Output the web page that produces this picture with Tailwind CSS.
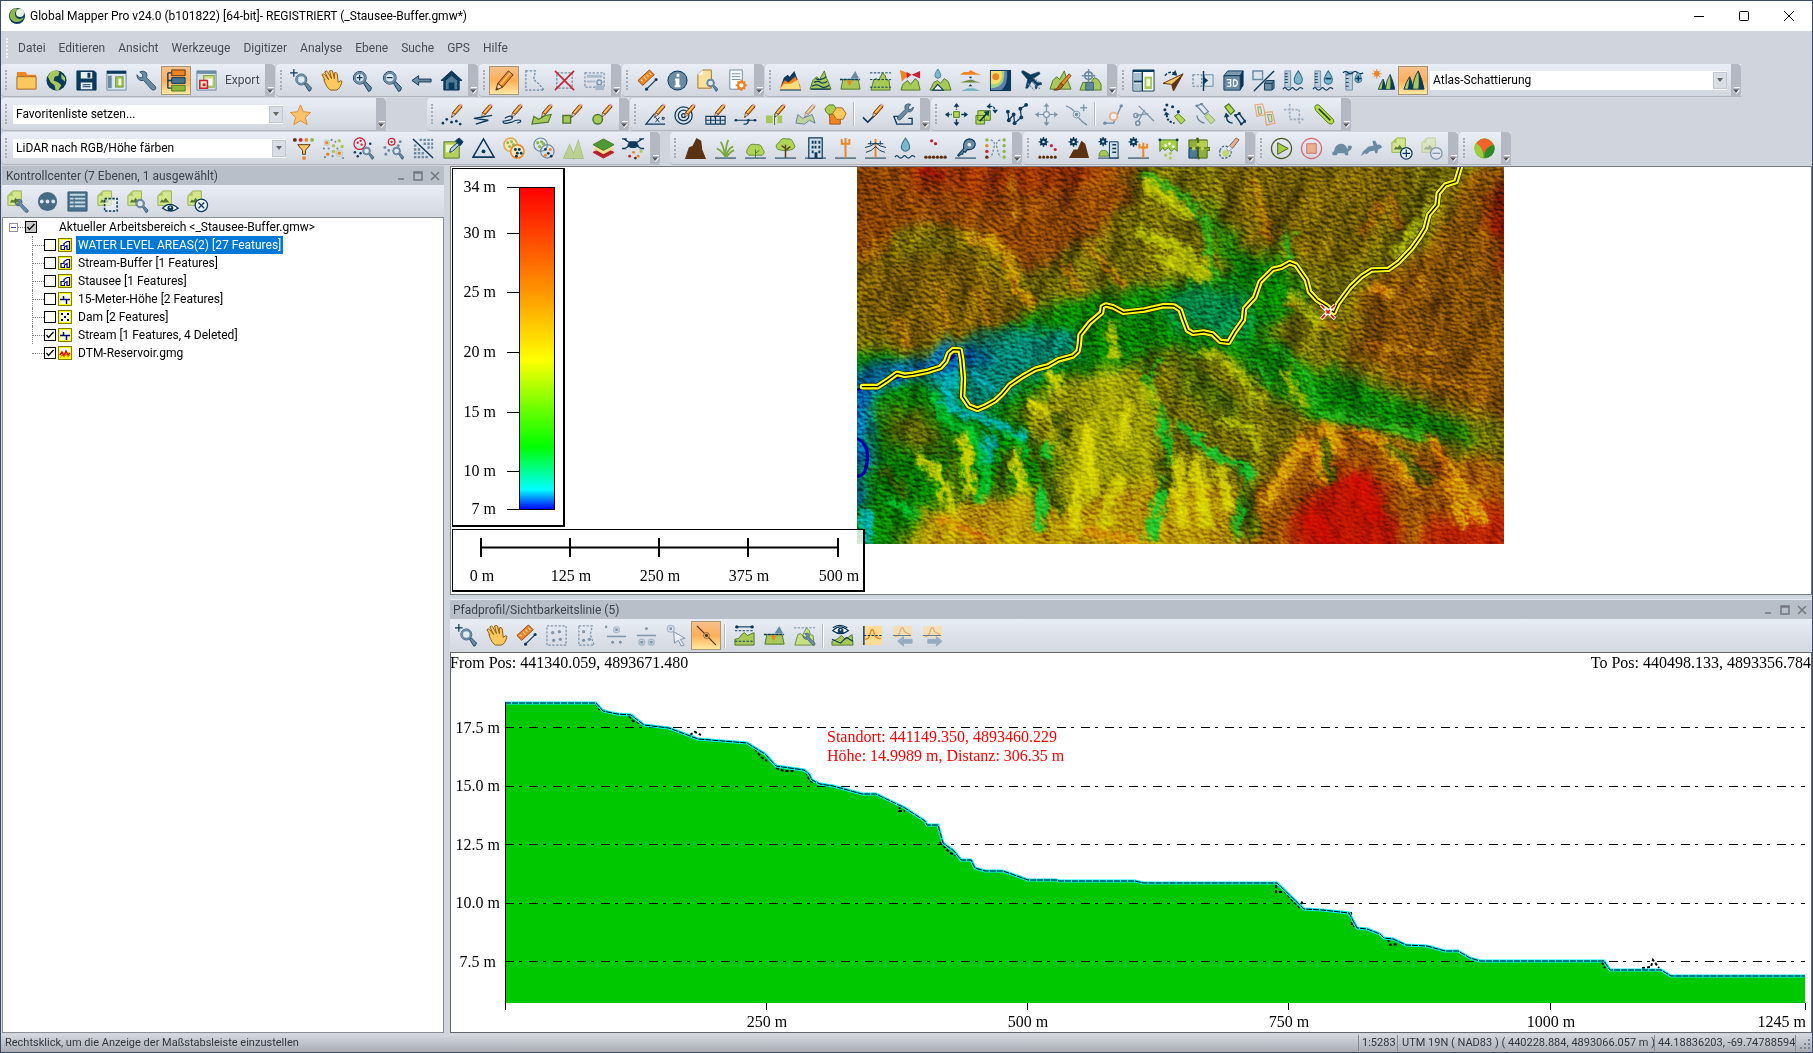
<!DOCTYPE html>
<html lang="de">
<head>
    <meta charset="utf-8">
    <title>Global Mapper Pro</title>
    <script src="https://cdn.jsdelivr.net/npm/@tailwindcss/browser@4"></script>
    <style>
        body {
            font-family: Roboto, 'Open Sans', sans-serif;
        }
        svg text {
            font-family: 'Liberation Serif', serif;
            font-size: 16px;
        }
    </style>
</head>
<body class="h-screen flex flex-col overflow-hidden bg-[#d0d4dd] border border-[#3b4d6b] text-xs text-black">

    <!-- Title bar -->
    <header class="flex items-center h-[30px] shrink-0 bg-white pl-2">
        <svg class="size-4" viewBox="0 0 16 16"><circle cx="8" cy="8" r="8" fill="#0b3a5c"/><path d="M4 1c-5 5-4 12 3 13 4 0 7-2 8-5-2 2-6 3-8 0-2-2-1-6 2-8-2-1-4-1-5 0z" fill="#8cb84a"/><circle cx="11" cy="5" r="4" fill="#e8f0e4"/></svg>
        <h1 class="ml-[5px] whitespace-nowrap">Global Mapper Pro v24.0 (b101822) [64-bit]- REGISTRIERT (_Stausee-Buffer.gmw*)</h1>
        <div class="ml-auto flex">
            <button aria-label="Minimieren" class="w-[45px] h-[30px] grid place-items-center"><svg class="size-3" viewBox="0 0 12 12"><path d="M1 6.500h10" stroke="#000"/></svg></button>
            <button aria-label="Maximieren" class="w-[45px] h-[30px] grid place-items-center"><svg class="size-3" viewBox="0 0 12 12"><rect x="1.500" y="1.500" width="9" height="9" rx="1" fill="none" stroke="#000"/></svg></button>
            <button aria-label="Schließen" class="w-[46px] h-[30px] grid place-items-center"><svg class="size-3" viewBox="0 0 12 12"><path d="M1 1l10 10M11 1L1 11" stroke="#000"/></svg></button>
        </div>
    </header>

    <!-- Menu -->
    <nav class="flex items-center h-[33px] shrink-0 pl-[5px] text-[#4a4d55]">
        <span class="h-5 border-l-2 border-dotted border-[#f4f5f8] mr-[10px]"></span>
        <div class="flex gap-[13px]">
            <button>Datei</button><button>Editieren</button><button>Ansicht</button><button>Werkzeuge</button><button>Digitizer</button><button>Analyse</button><button>Ebene</button><button>Suche</button><button>GPS</button><button>Hilfe</button>
        </div>
    </nav>

    <!-- Toolbars -->
    <section class="flex flex-col gap-px shrink-0 h-[101px]">
        <div class="flex">
            <div class="bar mr-px" data-tools="folder globe save layout wrench *tree export:Export"></div>
            <div class="bar mr-px" data-tools="zoomrect hand magplus magminus back home"></div>
            <div class="bar mr-px" data-tools="*pencil selpoly delsel editattr"></div>
            <div class="bar mr-px" data-tools="ruler info docsearch docgear"></div>
            <div class="bar mr-px" data-tools="mcolor mcontour mcut mdash mred mdrop split heat plane mbrush mtarget"></div>
            <div class="bar" data-tools="maplayout compass mirror cube percent gauge gaugeminus gaugeplus msun *mpair select:shader"></div>
        </div>
        <div class="flex">
            <div class="bar mr-[41px]" data-tools="select:fav star wide"></div>
            <div class="bar mr-px" data-tools="dpoints dzig dfree darea dsquare dcircle"></div>
            <div class="bar mr-px" data-tools="dangle dtarget dgrid darc dmirror dfade blob | dcheck wbox"></div>
            <div class="bar" data-tools="move scale reshape movefade addnode | nodefade cutfade rot1 rot2 rot3 dup crop tube"></div>
        </div>
        <div class="flex">
            <div class="bar mr-[10px]" data-tools="select:lidar lfilter lpoints lzoom lzoom2 lhatch lpick ltri lclass lclass2 lmesh llayers ldrone"></div>
            <div class="bar mr-px" data-tools="ground grass bush treeicon building pole wires water lowpts key corridor"></div>
            <div class="bar mr-px" data-tools="gpoints gground gbuild gpole gextract puzzle pbrush"></div>
            <div class="bar mr-px" data-tools="play stop turtle rabbit docadd docsub"></div>
            <div class="bar" data-tools="insight"></div>
        </div>
    </section>

    <main class="flex flex-1 min-h-0 gap-[5px] pt-px">
        <!-- Control center -->
        <aside class="w-[444px] shrink-0 flex flex-col pl-px pr-px">
            <div class="flex items-center h-[19px] pl-1 pr-[2px] bg-[#b9bfc9] text-[#3e424a]">
                <h2>Kontrollcenter (7 Ebenen, 1 ausgewählt)</h2>
                <div class="panelbtns ml-auto flex gap-1"></div>
            </div>
            <div class="flex h-8 bg-linear-to-b from-[#e9edf6] to-[#d3d7e0]" data-icons="cwrench cdots ctable cselect cfind ceye cclose"></div>
            <ul id="layers" class="flex-1 bg-white border border-[#8a8d94] mb-px pl-[6px]"></ul>
        </aside>

        <div class="flex-1 min-w-0 flex flex-col">
            <!-- Map view -->
            <section class="relative h-[429px] shrink-0 bg-white border border-[#77797f] overflow-hidden">
                <svg class="ml-[406px] w-[647px] h-[377px]" viewBox="0 0 647 377" preserveAspectRatio="none" role="img" aria-label="Geländemodell">
                    <defs>
                        <filter id="soft" x="-20%" y="-20%" width="140%" height="140%" color-interpolation-filters="sRGB"><feGaussianBlur stdDeviation="20" result="b"/><feTurbulence type="fractalNoise" baseFrequency=".02 .014" numOctaves="4" seed="4"/><feDisplacementMap in="b" scale="60" xChannelSelector="R" yChannelSelector="G"/></filter>
                        <filter id="ridge" x="-20%" y="-20%" width="140%" height="140%" color-interpolation-filters="sRGB"><feGaussianBlur stdDeviation="6" result="b"/><feTurbulence type="fractalNoise" baseFrequency=".05 .03" numOctaves="5" seed="9"/><feDisplacementMap in="b" scale="44" xChannelSelector="R" yChannelSelector="G"/></filter>
                        <filter id="fine" x="0" y="0" width="100%" height="100%" color-interpolation-filters="sRGB"><feTurbulence type="fractalNoise" baseFrequency=".22 .3" numOctaves="3" seed="3"/><feColorMatrix values="0 0 0 0 0 0 0 0 0 0 0 0 0 0 0 1 0 0 0 0"/><feDiffuseLighting surfaceScale="2.200" lighting-color="#fff" diffuseConstant="1"><feDistantLight azimuth="300" elevation="30"/></feDiffuseLighting></filter>
                        <filter id="broad" x="0" y="0" width="100%" height="100%" color-interpolation-filters="sRGB"><feTurbulence type="fractalNoise" baseFrequency=".024 .015" numOctaves="3" seed="21"/><feColorMatrix values="0 0 0 0 0 0 0 0 0 0 0 0 0 0 0 1 0 0 0 0"/><feDiffuseLighting surfaceScale="9" lighting-color="#fff" diffuseConstant="1"><feDistantLight azimuth="210" elevation="28"/></feDiffuseLighting></filter>
                    </defs>
                    <rect width="647" height="377" fill="#766e00"/>
                    <g transform="scale(.4209 .3333) translate(-17 -21)">
                        <g filter="url(#soft)">
                            <path fill="#904800" d="M-60-60H700L640 160 520 300 420 330 300 220 150 180 20 330-60 330z"/>
                            <path fill="#963400" d="M80-60H640L560 70 330 110 160 100z"/>
                            <path fill="#7a5c00" d="M-60 330L300 260 400 420 460 440 330 520 150 560-60 430z"/>
                            <path fill="#746c00" d="M420 340L620 200 760 340 700 400 560 420 470 460z"/>
                            <path fill="#087e00" d="M-60 560L150 590 330 520 460 440 600 400 760 370 900 340 840 160 860 130 930 280 1010 290 1040 320 1090 430 1000 480 1180 640 1400 760 1500 820 1480 850 1340 820 1120 780 1000 700 900 590 760 560 640 620 520 650 400 740 420 850 480 900 440 1200-60 1200z"/>
                            <path fill="#786200" d="M850-60H1330L1300 200 1180 320 1080 290 980 250 900 180z"/>
                            <path fill="#845000" d="M1210 400L1380 250 1460 60 1620-60 1620 800 1400 720 1180 600z"/>
                            <path fill="#8c1200" d="M1535 60L1700 30 1700 360 1550 330 1520 210z"/>
                            <path fill="#726c00" d="M990 480L1130 500 1180 620 1100 640 1010 540z"/>
                            <path fill="#008472" d="M320 520L480 500 560 560 480 620 380 700 300 780 200 700 180 620z"/>
                            <path fill="#008a4a" d="M760 390L900 370 960 440 960 540 800 510 740 440z"/>
                            <path fill="#0062b8" d="M-60 640L110 620 240 560 310 560 320 620 200 640 60 690 36 1010 0 1060-60 1050z"/>
                            <path fill="#a0a000" d="M540 660L680 600 740 760 720 1200 520 1200 500 960 440 780z"/>
                            <path fill="#b89800" d="M190 1040L420 980 520 1040 700 960 900 960 940 1240 80 1240z"/>
                            <path fill="#587200" d="M780 560L960 760 900 800 780 700z"/>
                            <path fill="#606800" d="M80 740L190 760 240 860 110 880z"/>
                            <path fill="#9a5400" d="M970 1000L1100 800 1240 800 1400 900 1700 900 1700 1300 960 1300z"/>
                            <path fill="#b81400" d="M1050 1060L1180 920 1260 960 1290 1060 1320 1200 1060 1300z"/>
                            <path fill="#bc2600" d="M1380 1080L1700 980 1700 1300 1340 1300z"/>
                        </g>
                        <g filter="url(#ridge)" fill="none" stroke-linecap="round" opacity=".92">
                            <path stroke="#bcc400" stroke-width="34" d="M700 70L760 120 810 170M690 220L780 260 830 320M740 300L840 350"/>
                            <path stroke="#c89400" stroke-width="26" d="M330 230L380 300 400 390 430 430M350 260L280 230"/>
                            <path stroke="#22b01c" stroke-width="18" d="M700 40L800 110 850 200 860 330 890 370M1010 560L1080 640 1110 760 1220 780 1380 840M1040 300L1040 220M740 600L700 650 740 760M960 600L1000 680"/>
                            <path stroke="#b87800" stroke-width="14" d="M385 60L395 180M210 380L235 490M300 400L335 490M110 480L150 560M510 310L545 390M570 260L650 380M960 60L1000 250M1340 330L1380 400M1220 220L1260 130M1160 510L1040 430M1240 560L1420 580M1280 640L1480 680M1290 100L1300 200M60 230L40 310"/>
                            <path stroke="#b0bc00" stroke-width="24" d="M620 500L630 590M840 570L930 640 970 720M1050 400L1110 490M880 780L950 800 960 860M1030 640L1080 740M690 680L730 720M1300 280L1380 150"/>
                            <path stroke="#00d038" stroke-width="20" d="M200 700L230 790 290 810 320 930 310 1020M360 800L420 870 470 860 450 1100M790 800L870 890 950 930 920 1120M740 780L760 880 740 1000 715 1130M1330 960L1260 840M90 1020L150 1060"/>
                            <path stroke="#d8d400" stroke-width="26" d="M170 900L220 960 240 1050M270 830L290 1000M390 880L410 980M640 960L600 1100M780 900L790 1090M880 920L900 1040M480 640L500 700M430 720L460 760M560 800L580 1000M660 740L650 860M540 960L540 1120M820 900L850 1100"/>
                            <path stroke="#d89800" stroke-width="28" d="M1130 800L1170 880M1200 810L1270 850 1340 990M1380 840L1450 960 1500 1080M1240 380L1280 400M220 1080L330 1140M560 1110L680 1150M990 1020L1080 840M1100 860L1120 960M1420 960L1460 1100"/>
                            <path stroke="#00b4bc" stroke-width="24" d="M240 650L230 740 330 780 420 830M40 1060L40 1150M330 830L330 900M330 680L290 640"/>
                            <path stroke="#466000" stroke-width="26" d="M820 640L900 730M790 600L850 680M490 760L510 840M375 880L360 1000M130 1000L80 930M1130 850L1140 960M1290 860L1370 960M750 900L755 980M440 860L500 1060M240 880L260 1020M940 980L960 1120"/>
                            <path stroke="#d01000" stroke-width="44" d="M1200 960L1250 1060M1100 1080L1140 1140"/>
                            <path stroke="#aa1800" stroke-width="30" d="M180 30L210 50"/>
                        </g>
                        <path d="M17 835Q42 850 42 890 40 950 17 950M17 690L120 650 220 615 250 585" fill="none" stroke="#0000a8" stroke-width="8"/>
                    </g>
                    <rect width="647" height="377" filter="url(#broad)" class="mix-blend-overlay" opacity=".4"/>
                    <rect width="647" height="377" filter="url(#fine)" class="mix-blend-overlay" opacity=".45"/>
                    <defs><path id="stream" d="M30 680L66 680 88 662 112 640 130 646 150 643 185 634 215 622 228 604 235 580 245 569 262 570 266 600 270 655 268 710 283 738 303 748 322 738 345 722 362 702 380 675 412 648 440 628 470 618 495 600 530 588 542 574 545 555 547 525 570 488 598 458 600 440 608 435 625 440 650 457 700 450 745 437 770 438 785 450 793 480 802 510 815 520 840 516 862 522 880 544 900 547 915 515 935 480 938 445 962 412 975 365 1005 328 1025 322 1045 308 1060 315 1085 360 1092 395 1110 420 1135 440 1150 458 1160 430 1190 380 1215 350 1240 330 1280 328 1305 305 1335 265 1355 230 1367 205 1375 165 1395 135 1398 100 1415 75 1440 65 1452 15" vector-effect="non-scaling-stroke" stroke-linejoin="round" stroke-linecap="round"/></defs>
                    <g transform="scale(.4209 .3333) translate(-17 -21)" fill="none">
                        <use href="#stream" stroke="#222200" stroke-width="7"/>
                        <use href="#stream" stroke="#ffff00" stroke-width="5.600"/>
                        <use href="#stream" stroke="#000" stroke-width="1.300"/>
                    </g>
                    <path d="M464 138l14 14M478 138l-14 14" stroke="#fff" stroke-width="3.500"/>
                    <path d="M464 138l14 14M478 138l-14 14" stroke="#f00000" stroke-width="1.600" stroke-dasharray="5 2"/>
                </svg>
                <!-- Elevation legend -->
                <svg class="absolute left-px top-px w-[113px] h-[359px] bg-white border border-r-2 border-b-2 border-black" viewBox="0 0 110 356" id="legend">
                    <defs><linearGradient id="elev" x2="0" y2="1"><stop stop-color="#f00"/><stop offset=".33" stop-color="#ff9800"/><stop offset=".536" stop-color="#ff0"/><stop offset=".7" stop-color="#60ff00"/><stop offset=".805" stop-color="#0f0"/><stop offset=".938" stop-color="#0ff"/><stop offset="1" stop-color="#00f"/></linearGradient></defs>
                    <rect x="66.500" y="18.500" width="35" height="322" fill="url(#elev)" stroke="#000"/>
                    <path d="M54 18.500h12M54 64.500h12M54 123.500h12M54 183.500h12M54 243.500h12M54 302.500h12M54 340.500h12" stroke="#000"/>
                    <g text-anchor="end"><text x="43" y="23">34 m</text><text x="43" y="69">30 m</text><text x="43" y="128">25 m</text><text x="43" y="188">20 m</text><text x="43" y="248">15 m</text><text x="43" y="307">10 m</text><text x="43" y="345">7 m</text></g>
                </svg>
                <!-- Scale bar -->
                <svg class="absolute left-px top-[362px] w-[413px] h-[63px] bg-white/80 border border-r-2 border-b-2 border-black" viewBox="0 0 410 60">
                    <path d="M28 17.500h357M28 8v19M117 8v19M206 8v19M295 8v19M385 8v19" stroke="#000" stroke-width="2"/>
                    <g text-anchor="middle"><text x="29" y="51">0 m</text><text x="118" y="51">125 m</text><text x="207" y="51">250 m</text><text x="296" y="51">375 m</text><text x="386" y="51">500 m</text></g>
                </svg>
            </section>

            <!-- Path profile -->
            <section class="flex-1 min-h-0 flex flex-col mt-[4px] mb-px">
                <div class="flex items-center h-5 px-[3px] bg-[#b9bfc9] text-[#3e424a] border-t border-[#e8ebf0]">
                    <h2>Pfadprofil/Sichtbarkeitslinie (5)</h2>
                    <div class="panelbtns ml-auto flex gap-1"></div>
                </div>
                <div class="flex items-center h-[33px] pl-px bg-linear-to-b from-[#e9edf6] to-[#d3d7e0]" data-icons="zoomrect hand ruler pselect pselpoly pabove pbelow ppick *pnode | pline mcut pwrench | peye pgraph pprev pnext"></div>
                <div class="flex-1 min-h-0 bg-white border border-[#66686e]">
                    <svg id="profile" class="w-full h-full" viewBox="451 653 1360 379" preserveAspectRatio="none">
                        <path id="terrain" fill="#00c800" d=""/>
                        <path d="M505 727.500H1805M505 786.500H1805M505 844.500H1805M505 903.500H1805M505 961.500H1805" stroke="#000" stroke-dasharray="9 5 3 7"/>
                        <path id="bare" fill="none" stroke="#000" stroke-dasharray="3 2" stroke-width="2"/>
                        <path id="sight" fill="none" stroke="#00f0ff" stroke-width="3"/>
                        <path id="sight2" fill="none" stroke="#000" stroke-dasharray="6 1"/>
                        <path d="M505.500 702V1010M766.500 1003v7M1027.500 1003v7M1288.500 1003v7M1550.500 1003v7M1805.500 1003v7" stroke="#000"/>
                        <text x="450" y="668">From Pos: 441340.059, 4893671.480</text>
                        <text x="1811" y="668" text-anchor="end">To Pos: 440498.133, 4893356.784</text>
                        <g text-anchor="end"><text x="500" y="733">17.5 m</text><text x="500" y="791">15.0 m</text><text x="500" y="850">12.5 m</text><text x="500" y="908">10.0 m</text><text x="496" y="967">7.5 m</text><text x="1806" y="1027">1245 m</text></g>
                        <g text-anchor="middle"><text x="767" y="1027">250 m</text><text x="1028" y="1027">500 m</text><text x="1289" y="1027">750 m</text><text x="1551" y="1027">1000 m</text></g>
                        <g fill="#f00"><text x="827" y="742">Standort: 441149.350, 4893460.229</text><text x="827" y="761">Höhe: 14.9989 m, Distanz: 306.35 m</text></g>
                    </svg>
                </div>
            </section>
        </div>
    </main>

    <!-- Status bar -->
    <footer class="flex items-center h-[18px] shrink-0 bg-linear-to-b from-[#d6d9df] to-[#a8adb5] pl-1 text-[#33363d] whitespace-nowrap">
        <span class="text-[11px]">Rechtsklick, um die Anzeige der Maßstabsleiste einzustellen</span>
        <div class="ml-auto flex items-center text-[11px] leading-4">
            <span class="w-[39px] border-l border-[#888c94] pl-[3px]">1:5283</span>
            <span class="w-[257px] border-l border-[#888c94] pl-1">UTM 19N ( NAD83 ) ( 440228.884, 4893066.057 m )</span>
            <span class="w-[141px] border-l border-[#888c94] pl-[3px]">44.18836203, -69.74788594</span>
            <svg class="w-[17px] h-4 border-l border-[#888c94]" viewBox="0 0 16 16"><path d="M12 4h2v2h-2zM12 8h2v2h-2zM12 12h2v2h-2zM8 8h2v2H8zM8 12h2v2H8zM4 12h2v2H4z" fill="#7d828b"/></svg>
        </div>
    </footer>

    <script>
        const N = '#0b3a5c', S = '#6b8ba3', G = '#a8c85a', O = '#ee8422', Y = '#fbc75f', B = '#5b3213', R = '#cc1f2f', D = '#4d7a2a';
        const f = (c, d) => `<path fill="${c}" d="${d}"/>`;
        const s = (c, d, w = 1.5, x = '') => `<path fill="none" stroke="${c}" stroke-width="${w}" d="${d}" ${x}/>`;
        const fs = (c, k, d, w = 1) => `<path fill="${c}" stroke="${k}" stroke-width="${w}" d="${d}"/>`;
        const c = (x, y, r, col) => `<circle cx="${x}" cy="${y}" r="${r}" fill="${col}"/>`;
        const ring = (x, y, r, col, w = 1.5, fill = 'none') => `<circle cx="${x}" cy="${y}" r="${r}" fill="${fill}" stroke="${col}" stroke-width="${w}"/>`;
        const dots = (col, r, ...p) => { let t = ''; for (let i = 0; i < p.length; i += 2) t += c(p[i], p[i + 1], r, col); return t; };
        const fade = (t, o = .45) => `<g opacity="${o}">${t}</g>`;
        const at = (x, y, k, t) => `<g transform="translate(${x} ${y}) scale(${k})">${t}</g>`;
        const dash = (col, d, w = 1.3) => s(col, d, w, 'stroke-dasharray="2.500 1.500"');

        // shared parts
        const pen = fs(O, B, 'M12 10l7-8 3 2-7 8z') + f(Y, 'M13 10l7-8 1 1-7 8z') + fs('#f0d8b4', B, 'M12 10l3 2-4 3z', .7) + f(B, 'M10.500 15.500l2-1-1-1z') + f('#e89a90', 'M19 2l1-1.500 3 2-1 1.500z');
        const mag = fs(S, N, 'M14 15l2-2 6 6-1 3-2 1z', 1) + ring(10, 9, 6.500, N, 1, '#dfeaf2') + ring(10, 9, 5, S, 2.200);
        const doc = fs('#d3e68c', '#93b04f', 'M2 6l5-5h9v15H2z') + f('#a5c45c', 'M2 6h5V1z') + f('#587a34', 'M4 13l2-3 2 1 2-3 4 5z');
        const spanner = fs(S, '#33546e', 'M2 6l3 3h3V6L5 3q4-2 7 1 1 3 0 5l9 9q2 3-1 4-2 0-3-1L9 12q-4 1-6-2-1-2-1-4z', 1);
        const mt = (a, b = D) => fs(a, b, 'M2 22l3-11 3-1 2 2 4-8 3 3 1 4 3 1 1 10z');
        const mount = fs(G, D, 'M1 21l3-9 4-4 3 3 5-9 2 7 2 4 3 8z');
        const gear = () => ring(8, 6, 3, N, 2.500) + s(N, 'M8 0v12M2 6h12M4 2l8 8M12 2L4 10', 1.800) + c(8, 6, 1.500, '#dde6ee');
        const drop = () => fs('#7db7cc', '#2f6e88', 'M5 0q5 7 3 10-3 3-6 0Q0 7 5 0z', .9);
        const wave = s(N, 'M1 21q2-3 4 0 2 2 4 0 2-3 4 0 2 2 4 0 2-3 5 0', 1.200);
        const base = s('#2f5873', 'M1 22h22', 1.300);
        const eye = fs('#fff', N, 'M6 17q7-8 16 0-8 6-16 0z', 1.500) + c(14, 17, 3, N) + c(14, 16, 1, '#cfe0ea');
        const gaugeBar = fs('#b7cbd8', S, 'M3 2h6v17H3z', .9) + s(N, 'M3 5h3M3 8h3M3 11h3M3 14h3', 1) + wave;
        const pines = fs(G, N, 'M2 21q2-7 6-13 3 8 4 13z') + f(N, 'M8 8q-1 8-2 13h6Q11 15 8 8z') + fs(G, N, 'M11 21q1-12 6-19 4 9 6 19z') + f(N, 'M17 2q1 11 0 19h6Q21 10 17 2z');

        const icons = {
            folder: f(O, 'M2 3h9l2 3h9v5H2z') + fs(Y, '#a8651c', 'M2 8h20v13H2z'),
            globe: c(12, 12, 10.500, N) + f(G, 'M6 3q5-3 9 0l-1 4-4 1-1 4 5 2 3 3-3 5-3 0-1-5-4-3-3-6zM17 5l4 4v4l-4-3z'),
            save: fs(N, N, 'M2 2h18l2 2v18H2z') + f('#e7eef4', 'M6 3h12v7H6zM6 14h12v7H6z') + f(N, 'M13 4h3v5h-3zM8 16h8v1H8zM8 18h8v1H8z'),
            layout: fs('#dce6ee', S, 'M2 2h20v20H2z') + f(N, 'M2 2h20v3H2z') + f(S, 'M3 7h4v13H3z') + fs('#9fc04c', D, 'M11 8h8v11h-8z', .6) + f('#f4f8e0', 'M14 10h3v7h-3z'),
            wrench: spanner,
            tree: s(N, 'M3 4v16M3 4h5M3 12h5M3 20h5', 1.400) + fs(O, B, 'M7 1h14v6H7z') + fs('#46708c', N, 'M7 9h14v6H7z') + fs('#88b93c', D, 'M7 17h14v6H7z'),
            export: fs('#d5e0e8', S, 'M2 2h20v20H2z') + f(S, 'M2 2h20v3H2z') + fs('#cfe08a', '#8fae48', 'M9 7h11v12H9z', 1.300) + f('#fff', 'M12 10h6v7h-6z') + fs('#f6e4c0', R, 'M5 12h8v8H5z', 1.600) + f(R, 'M8 15h3v3H8z'),
            zoomrect: s(N, 'M0 4h8M4 0v8', 1.300) + at(3, 3, .88, mag),
            hand: fs(Y, '#8a5a14', 'M5 11L2 6q1-2 3 0l4 5-4-8q2-2 3 0l4 7-2-8q2-1 3 0l2 8V4q2-1 3 1l1 9q3-3 4-1-2 8-6 9h-6q-4-2-7-11z'),
            magplus: at(0, 0, 1.020, mag) + s(N, 'M7 9h6M10 6v6', 1.400),
            magminus: at(0, 0, 1.020, mag) + s(N, 'M7 9h6', 1.400),
            back: fs(S, N, 'M2 12l7-5v3.500h13v3H9V17z'),
            home: fs(N, N, 'M1 12L12 2l11 10h-3v10H4V12z') + f('#507a98', 'M6 12l6-5 6 5v9h-3v-7H9v7H6z'),
            pencil: fs(O, B, 'M5 15L16 2l5 4L10 19z') + s(Y, 'M8 16L18 4', 1.800) + fs('#f0d8b4', B, 'M5 15l5 4-7 3z') + f(B, 'M3 22l3-1-2-2z'),
            selpoly: dash(S, 'M3 2h10l-2 9 5 4 6 7H3z'),
            delsel: dash(S, 'M4 4h16v16H4z') + s(R, 'M2 2l20 20M22 2L2 22', 1.600),
            editattr: fade(dash(N, 'M2 4h20v15H2z') + f(S, 'M4 6h16v3H4zM4 12h9v2H4z') + ring(17, 14, 2.500, N) + f(S, 'M13 17h9v5h-9z')),
            ruler: fs(O, '#8f4710', 'M2 12L14 1l5 5L7 17z') + s('#ffe0b0', 'M5 11l2 2M8 8l3 3M11 6l2 2M14 4l2 2', 1.200) + s(N, 'M11 21L21 11', 1.200) + dots(N, 1.600, 11, 21, 21, 11),
            info: c(12, 12, 10.500, N) + c(12, 12, 9.500, S) + f('#fff', 'M11 5h3v3h-3zM10 10h4v7h1v2h-6v-2h1v-5h-1z'),
            docsearch: fs('#fbdf9c', '#a3732a', 'M2 6l5-5h9v19H2z') + f('#fff', 'M2 6h5V1z') + at(9, 9, .62, mag),
            docgear: fs('#fff', S, 'M4 1h13v20H4z') + s(S, 'M6 5h9M6 8h9M6 11h9', 1) + ring(16, 17, 3.500, O, 2.500, '#fff') + s(O, 'M16 11v3M16 20v3M10 17h3M19 17h3M12 13l2 2M18 19l2 2M20 13l-2 2M14 19l-2 2', 1.600),
            mcolor: f(N, 'M2 18l3-9 4-3 2 2 5-6 3 8 3 8z') + fs(O, '#d0660c', 'M2 18l4-6 4 2 7-6 5 10v3H2z', .6) + f('#fbdc7a', 'M1 21l4-5 8-1 7-4 2 10z') + s(N, 'M1 22h22', 1),
            mcontour: mount + s(N, 'M3 18q5-3 9 0t9-1M5 14q5-2 7 0t7-1M7 10q6 3 11-2M2 21h20', 1.300),
            mcut: fs(G, D, 'M2 21l2-10h16l2 10z') + f(S, 'M12 10l5-8 4 8z') + s(N, 'M1 11h21', 1.500, 'stroke-dasharray="3 1"') + f(O, 'M8 12h6l-3 6z'),
            mdash: mt(G) + dash(N, 'M1 4h22M1 11h22M1 19h22', 1),
            mred: fs(G, D, 'M2 22l2-6 5-4 3 4 5-6 3 3 2 9z') + f(O, 'M1 1l10 4-8 8z') + f(R, 'M8 3l5 3-5 4zM13 6l9-4v8z'),
            mdrop: fs(G, D, 'M1 22l4-8 4-2 3 3 4-5 4 3 3 9z') + fs('#fff', N, 'M4 22l5-6 6 6z', 1.200) + at(5, 0, .85, drop()),
            split: f(O, 'M1 6l4-3 5 0 2-2 5 3 6 2z') + f('#6f8a3c', 'M1 14l7-2 5-1 5 2 5 1z') + f('#79b4c4', 'M2 23l7-3 7 0 6 3z') + f(N, 'M10 8h4l-2 2zM10 18h4l-2-2z'),
            heat: f(N, 'M1 1h22v22H1z') + f('#5f7fae', 'M2 2h17q1 14-6 20H2z') + f('#9bd38a', 'M2 2h14q1 12-6 16-4 2-8 2z') + f('#f7e06a', 'M2 2h11q2 10-4 13-3 1-7 1z') + c(7, 8, 3.500, O),
            plane: at(24, 0, 1, `<g transform="scale(-1 1)">${fs(N, N, 'M19 2q3-1 2 2l-6 7 2 9-2 0-4-7-4 3 0 4-1 1-2-4-4-1 1-2 4 0 4-4-7-5 1-2 9 3z', .6)}</g>`) + s(S, 'M14 13l8 8M9 15l7 7M15 9l7 6', 1.200, 'stroke-dasharray="2 1"'),
            mbrush: mount + fs(O, B, 'M12 15L21 5l2 2-8 10z', .8) + fs('#c25a12', B, 'M12 15l3 2q-3 6-10 5 4-1 7-7z', .8),
            mtarget: fs(G, D, 'M1 22l3-8h7v8zM13 22v-9l3-4 4 2 3 5v6z') + fs('#5f87a2', '#3b5f78', 'M7 14h8v8H7z') + ring(10, 7, 4, S, 2) + s(S, 'M10 0v14M3 7h14', 1.400),
            maplayout: fs('#fff', N, 'M1 1h22v22H1z') + f('#a9c0cf', 'M2 4h8v8H2zM2 15h8v7H2z') + f(N, 'M2 12h8v2H2zM10 1h1.500v22H10zM1 1h22v2H1z') + f(G, 'M13 8h8v13h-8z') + f('#f0f6dc', 'M15 10h4v8h-4z'),
            compass: fs(Y, B, 'M1 15L22 5 12 23l-2-7z') + f(B, 'M22 5L12 23l-2-7z') + s(N, 'M3 7q5-6 11-2', 1.500, 'stroke-dasharray="3 1.500"') + f(N, 'M14 1l2 6-6-1z'),
            mirror: dash(S, 'M1 6h9v12H1z') + fs('#d9e4ec', S, 'M13 6h9v12h-9z') + s(N, 'M12 2v21', 1.500) + f(N, 'M12 8l5 4-5 4z'),
            cube: fs('#7e9bb0', N, 'M2 7l4-5h16l-3 5z') + fs('#0e3049', N, 'M19 7l3-5v15l-3 5z') + fs('#6d8da5', N, 'M2 7h17v15H2z') + s('#fff', 'M5 11h4v7H5M6 14.500h3M12 11v7q4 0 4-3.500T12 11', 1.300),
            percent: fs('#d9e4ec', S, 'M1 2h10v9H1z', 1.500) + s(N, 'M2 23L23 2', 1.500) + fs(S, N, 'M13 15l2-3h8v8l-2 2h-8zM13 15h8v7M21 15l2-3', 1),
            gauge: gaugeBar + at(11, 2, 1.200, drop()),
            gaugeminus: gaugeBar + at(11, 2, 1.200, drop()) + s(N, 'M14 10h6', 1.800),
            gaugeplus: fs('#b7cbd8', S, 'M4 3h7v19H4z', .9) + s(N, 'M4 6h3M4 10h3M4 14h3M4 18h3', 1) + s(N, 'M1 4q3-3 5 0 3 2 5 0 3-3 5 0 3 2 6 0', 1.400) + at(12, 3, 1, drop()) + s(N, 'M14 10h6M17 7v6', 1.500),
            msun: at(5, 4, .82, pines) + c(5, 5, 2.800, O) + s(O, 'M5 0v10M0 5h10M1.500 1.500l7 7M8.500 1.500l-7 7', 1),
            mpair: pines,
            star: fs('#fbc06a', '#e08a34', 'M12 2l3 7 7.500 1-5.500 5 2 7.500-7-4-7 4 2-7.500L1.500 10 9 9z'),
            dpoints: pen + dots(N, 1.400, 2, 21, 6, 17, 11, 20, 16, 19, 20, 22),
            dzig: pen + s(N, 'M22 13L3 16l15 2L5 22', 1.400),
            dfree: pen + s(N, 'M4 16q6-4 8-1 0 3-10 4 0 4 9 1 6-3 9-2 2 2-3 3', 1.200),
            darea: pen + fs(G, D, 'M1 22l2-8 5 3 7-4 6-1-3 8z', 1.200),
            dsquare: pen + fs(G, D, 'M2 13h8v8H2z', 1.500),
            dcircle: pen + ring(7, 17, 5, D, 1.500, G),
            dangle: pen + s(N, 'M22 22H2L11 11', 1.300) + s(N, 'M12 15l4 5M16 15l-4 5M19 15h2v2h-2z', 1),
            dtarget: ring(10, 13, 9, N, 1.300) + ring(10, 13, 5.500, N, 1.300) + ring(10, 13, 2, N, 1.300) + pen,
            dgrid: pen + s(N, 'M2 14h20v8H2zM2 18h20M7 14v8M12 14v8M17 14v8', 1.200),
            darc: pen + s(N, 'M2 18h20M15 18q0 5-5 4', 1.300) + dots(N, 1.400, 2, 18, 15, 18, 22, 18),
            dmirror: pen + f(G, 'M2 13h7v8H2zM14 13h5v8h-5z') + s(D, 'M11 11v12', 1),
            dfade: fade(pen + fs(G, N, 'M2 21l2-9 5 4 10-4 3 9-6-3-5 4z'), .55),
            blob: fs(O, '#a85010', 'M5 10h7l5 6v6H6v-6z') + fs('#a8cf4a', D, 'M1 6l4-4h5l3 4-2 5-6 1-3-3z') + fs(Y, '#a96a1c', 'M9 11l4-6h6l4 6-3 6h-7z'),
            dcheck: s(N, 'M1 15l5 5L16 10', 1.600) + pen,
            wbox: s(N, 'M9 14H2l3 8h16v-6h-4', 1.400) + at(24, -1, 1, `<g transform="scale(-.850 .850)">${spanner}</g>`),
            move: fs('#b5d84c', D, 'M9 9h6v6H9z') + s(N, 'M12 1v6M12 17v6M1 12h6M17 12h6', 1.500, 'stroke-dasharray="4 1"') + f(N, 'M12 0l3 4H9zM12 24l3-4H9zM0 12l4-3v6zM24 12l-4-3v6z'),
            scale: fs('#b5d84c', D, 'M1 13h9v9H1zM3 8h13v10H3z') + s(N, 'M5 19L13 10', 1.800) + f(N, 'M15 8l-1 6-5-5z') + s(N, 'M15 4q5-2 6 4', 1.300, 'stroke-dasharray="3 1"') + f(N, 'M12 4l4-4v6zM18 7h6l-3 4z'),
            reshape: s(N, 'M3 9l1 9 5-6 1 9 7-6-1-9 6-4', 1.300) + dots(N, 2, 3, 9, 4, 18, 9, 12, 10, 21, 17, 15, 16, 6, 22, 2),
            movefade: fade(s(N, 'M12 1v22M1 12h22', 1.300) + f(N, 'M12 0l3 4H9zM12 24l3-4H9zM0 12l4-3v6zM24 12l-4-3v6z') + ring(12, 12, 3, N, 1.200, '#fff')),
            addnode: fade(s(N, 'M1 3q8 3 11 9t11 11M16 5h7M19.500 1.500v7', 1.600) + ring(12, 12, 3.500, N, 1, '#fff') + c(12, 12, 2, N)),
            nodefade: fade(s(N, 'M2 21h9l8-18', 1.300) + ring(11, 14, 4, O, 2, '#fff') + dots(N, 1.800, 2, 21, 19, 3), .5),
            cutfade: fade(s(N, 'M6 3l16 16M12 7L5 20M3 13l13-2', 1.300) + ring(3, 13, 2.200, N) + ring(5, 21, 2.200, N)),
            rot1: fs('#b5d84c', D, 'M12 14l4-3 7 7-4 4z') + dots(N, 1.600, 4, 2, 10, 4, 2, 7, 16, 9) + dash(N, 'M4 12q0 8 8 9', 2) + f(N, 'M1 13l6-1-4-3z'),
            rot2: fade(s(N, 'M4 3l5-2 7 8-4 3zM4 13q1 7 8 8', 1.300) + fs('#b5d84c', D, 'M12 14l4-3 7 7-4 4z') + dots(N, 1.500, 4, 3, 9, 1), .55),
            rot3: fs('#b5d84c', D, 'M2 4l4-3 6 7-4 4z', 1.300) + s(N, 'M13 13l4-2 6 8-4 3zM4 14q-1 6 6 7', 1.500) + f(N, 'M1 15l6-1-4-4z') + dots(N, 1.500, 13, 13, 17, 11, 23, 19, 19, 22),
            dup: fade(s(O, 'M2 2l8-1 3 11-9 2zM12 10l8-1 3 12-9 2z', 1.200) + fs('#cfe08a', D, 'M5 4h3l1 7-3 1zM15 12h4l1 7-3 1z'), .6),
            crop: fade(dash(N, 'M7 1v16h16M1 7h16v16', 1.800), .3),
            tube: fs('#b5d84c', '#4c7a1c', 'M2 5q0-4 4-3l15 15q2 4-2 5-2 0-3-1L3 8z') + s('#21400c', 'M6 6l12 12', 1.800),
            lfilter: dots(B, 2, 3, 3) + dots(R, 2, 9, 3) + dots(O, 2, 15, 3) + dots('#8cb84a', 2, 21, 3) + fs(Y, B, 'M6 8h13l-5 6v4h-3v-4z') + dots(O, 2, 12.5, 22),
            lpoints: ring(5, 6, 3, '#b5c4a0', .8) + ring(18, 17, 3.500, '#b5c4a0', .8) + dots(O, 1.800, 5, 6, 18, 17, 6, 18) + dots(G, 1.800, 12, 9, 18, 4, 12, 15, 21, 10) + dots(S, 1.100, 10, 3, 14, 5, 2, 12, 7, 12, 16, 12, 3, 21, 11, 20, 22, 22),
            lzoom: ring(8, 7, 6, R, 1.300) + dots(R, 1.200, 6, 6, 9, 4, 10, 8) + dots(N, 1.300, 3, 16, 6, 20, 9, 17, 19, 7) + at(9, 9, .62, mag),
            lzoom2: ring(10, 5, 3.500, R, 1.300) + dots(R, 1.200, 10, 5) + dots(S, 1.500, 3, 11, 7, 14, 4, 18, 19, 5, 17, 9) + at(9, 9, .62, mag),
            lhatch: s(N, 'M1 2l21 20', 1.500) + dash(S, 'M8 3h14M12 7h10M16 11h6M2 9h3M2 13h7M2 17h11M2 21h15', 2.500),
            lpick: fs('#b7cf5e', D, 'M2 5h16v17H2z') + f('#eef5c8', 'M4 8h8v8H4z') + fs('#b9d0df', N, 'M8 16l1-4 7-6 2 2-7 7z') + fs(N, N, 'M14 4l4-3 4 4-3 4z'),
            ltri: s(N, 'M12 2L1 21h22z', 1.600) + dots(N, 2, 12, 15),
            lclass: ring(9, 8, 7, '#e0a54c', 1.500, '#f6e6b8') + ring(16, 15, 7, O, 1.500, '#f5e7c0') + dots('#8cb84a', 1.500, 6, 6, 10, 5, 8, 10, 12, 8) + dots(N, 1.500, 14, 13, 18, 13, 16, 17, 20, 17, 15, 20),
            lclass2: ring(9, 8, 7, S, 1.200) + ring(16, 15, 7, S, 1.200) + dots('#8cb84a', 1.700, 6, 6, 10, 5, 8, 10, 12, 7) + dots(N, 1.400, 14, 13, 17, 17, 20, 20) + dots(O, 1.600, 19, 13, 14, 19),
            lmesh: fade(s('#7a9a2c', 'M2 22L8 8l4 10 5-14 5 18zM5 22l3-14 4 14 5-18 2 18M4 17h17', 1.200) + f(G, 'M2 22L8 8l4 10 5-14 5 18z'), .6),
            llayers: fs('#b0202c', R, 'M1 16l11-5 11 5-11 6z') + f('#f2dc90', 'M1 12l11-6 11 6-11 6z') + fs('#4d9a34', D, 'M1 8l11-6 11 6-11 6z'),
            ldrone: fs(N, N, 'M8 5h7l2 4-3 2H9L6 9z') + s(N, 'M2 2l6 4M21 2l-6 4M3 12l5-3M20 12l-5-3M0 2h5M18 2h5M0 12h5M18 12h5', 1.400) + dots(O, 1.500, 12, 16, 17, 20) + dots(R, 1.500, 8, 20) + dots(G, 1.500, 20, 15) + dots(B, 1.500, 14, 22),
            ground: f(B, 'M1 23l4-12 4-2 4-8 5 3 1 9 4 10z'),
            grass: base + s('#7aa83a', 'M12 21Q8 14 3 12M12 21Q10 10 7 5M12 21q0-12 3-18M12 21q3-10 8-11M13 21q4-6 8-7', 1.800),
            bush: base + fs('#b0d455', D, 'M5 19q-4-3-1-7 2-6 8-4 6-1 7 4 4 4 0 7z', .8) + s(D, 'M12 22v-9M12 17l4-3', 1),
            treeicon: base + fs('#b0d455', D, 'M4 13q-4-4 1-7 3-6 8-4 6-1 7 4 4 5-1 7-7 3-15 0z', .8) + s('#5a4420', 'M12 22V8M12 14l5-4M12 12L8 9', 1.600),
            building: base + fs('#d0dfe9', N, 'M5 1h14v21H5z', 1.300) + f(N, 'M8 4h2v3H8zM11 4h2v3h-2zM15 4h2v3h-2zM8 9h2v3H8zM11 9h2v3h-2zM15 9h2v3h-2zM8 14h2v3H8zM15 14h2v3h-2zM11 16h3v6h-3z'),
            pole: base + s(O, 'M12 1v21M8 2v5h8V2', 2),
            wires: base + s(O, 'M12 2v20', 2) + s(N, 'M4 7h16M12 6Q8 10 1 11M12 6q4 4 11 5M12 10q-4 5-10 6M12 10q4 5 10 6M7 4v4M17 4v4', 1),
            water: at(6, 1, 1.200, drop()) + wave,
            lowpts: dots(R, 1.700, 8, 4, 12, 7) + dots(B, 1.800, 2, 21, 6, 21, 10, 21, 14, 21, 18, 21, 22, 21),
            key: base + fs(S, N, 'M4 19l6-7q-1-9 6-10 7 1 6 7-2 5-8 4l-2 3-2-1-1 3H7l-2 2z', 1.200) + c(16, 8, 2, '#dfe9f0'),
            corridor: dots('#8cb84a', 1.800, 3, 3, 21, 3, 21, 9, 21, 15, 21, 21) + dots(O, 1.800, 3, 9) + dots(R, 1.800, 3, 15) + dots(B, 1.800, 3, 21) + dash(S, 'M7 3q6 2 3 9-1 6-3 9M17 3q-6 2-3 9 1 6 3 9'),
            gpoints: at(0, 0, .85, gear()) + dots(R, 1.600, 15, 9, 19, 13) + dots(B, 1.600, 3, 21, 7, 21, 11, 21, 15, 21, 19, 21),
            gground: f(B, 'M2 22l5-9 4 0 4-9 4 3 4 15z') + at(0, 0, .85, gear()),
            gbuild: fs('#d0dfe9', N, 'M13 5h9v17h-9z') + s(N, 'M16 8h4M16 12h4M16 16h4', 1.500) + fs(G, D, 'M2 20q0-6 5-6t5 6z', .8) + s(N, 'M1 22h22', 1) + at(0, 0, .8, gear()),
            gpole: base + s(O, 'M17 6v16M13 7v4h8V7', 2) + at(0, 0, .85, gear()),
            gextract: fs('#a8cf3f', D, 'M3 3h18v12l-3-3-3 3-3-4-4 3-2-3-3 4z') + dots('#fff', 1.500, 9, 9, 13, 7, 17, 10) + dots('#b0cf50', 1.700, 9, 19, 14, 17, 14, 22) + dots(N, 1.500, 3, 3, 21, 3),
            puzzle: fs('#8fae3c', '#47631a', 'M2 3h9v8H2zM12 3h9v8h3v3h-3v8h-9z') + f('#b7cf4e', 'M13 4h8v7h-8z') + fs('#4f7a96', N, 'M2 12h9v10H2z') + s('#47631a', 'M11.500 3v19M2 11.500h19', 1.200) + dots('#b7cf4e', 2, 12, 8, 7, 12, 16, 12) + dots('#47631a', 1.500, 11, 2, 12, 22),
            pbrush: fade(dash(N, 'M3 14q3-7 9-3 5 5 1 9-7 5-10-1z') + c(9, 17, 3.500, '#b5d84c') + fs('#e6a079', B, 'M13 9l7-8 3 2-7 9z') + fs('#eee', S, 'M10 12l3-3 3 3-4 3z'), .75),
            play: ring(12, 12, 10.500, '#4a5c2c', 1.300) + fs('#a3cf3a', '#4a5c2c', 'M8 6l11 6-11 6z'),
            stop: fade(ring(12, 12, 10.500, R, 1.300) + fs('#f0924c', R, 'M7 7h10v10H7z'), .6),
            turtle: f(S, 'M3 19q-2-3 1-4 1-7 7-8 6 0 7 6l1-4q4-1 4 2-1 3-4 4v4h-3l-1-2-7 0-1 2z'),
            rabbit: f(S, 'M1 20l2-5 6-5 5-1-1-5 3 0 2 4q4-1 5 3l-4 2-1 4h-2l-1-3-5 1-3 3-2-1z'),
            docadd: doc + ring(17, 17, 6, N, 1.300, '#eaf1f6') + s(N, 'M13 17h8M17 13v8', 1.300),
            docsub: fade(doc + ring(17, 17, 6, N, 1.300, '#eaf1f6') + s(N, 'M13 17h8', 1.300)),
            insight: c(12, 12, 10.500, '#5fa82e') + f('#f2632a', 'M3 7Q12-4 21 7l-9 10z') + f('#9dcc3f', 'M1.500 12Q2 6 4 7q7 4 7 15Q2 21 1.500 12z') + f('#2f8a2a', 'M12 22q-1-12 10-14 3 12-10 14z'),
            cwrench: doc + at(8, 8, .7, spanner),
            cdots: c(12, 12, 10, '#466b85') + dots('#dbe6ee', 2, 6, 12, 12, 12, 18, 12),
            ctable: fs('#46708c', '#3b5d77', 'M2 2h20v20H2z') + f('#c6d6e1', 'M4 4h16v2H4zM4 8h4v2H4zM9 8h11v2H9zM4 12h4v2H4zM9 12h11v2H9zM4 16h4v2H4zM9 16h11v2H9z'),
            cselect: doc + fade(f('#eef3f7', 'M9 9h13v13H9z'), .6) + dash(N, 'M9 9h13v13H9z', 1.600),
            cfind: doc + at(8, 8, .68, mag),
            ceye: doc + at(1, 2, 1, eye),
            cclose: doc + ring(16, 16, 6.500, N, 1.300, '#eaf1f6') + s(N, 'M13 13l6 6M19 13l-6 6', 1.300),
            pselect: fade(dash(N, 'M2 2h20v20H2z') + dots(N, 1.700, 8, 9, 15, 8, 9, 17, 16, 16)),
            pselpoly: fade(dash(N, 'M4 2h14l-2 9 4 11H4z') + dots(N, 1.700, 9, 8, 9, 17, 15, 16)),
            pabove: fade(s(N, 'M2 13h20', 1.600) + ring(12, 6, 3, S) + dots(N, 1.500, 12, 6, 8, 19, 16, 19, 1, 3)),
            pbelow: fade(s(N, 'M2 12h20', 1.600) + ring(7, 19, 3, S) + ring(17, 19, 3, S) + dots(N, 1.500, 12, 5, 7, 19, 17, 19)),
            ppick: fade(ring(6, 5, 3.500, S) + dots(N, 1.500, 6, 5) + fs('#fff', N, 'M9 8l12 7-5 1 4 6-3 1-3-6-4 3z')),
            pnode: s(B, 'M2 2l20 20', 1.300) + ring(12, 12, 3, '#7a5a34', 1, '#ffd79a') + dots(B, 1.700, 12, 12),
            pline: s(N, 'M4 3h16', 1.200) + dots(N, 1.800, 4, 3, 20, 3) + fs(G, D, 'M2 22v-6l4-1 3-4 3-2 3 3 7-3v13z') + dash(N, 'M2 18h19M2 7h20', 1),
            pwrench: fade(mt('#c4e06a'), .8) + dash(S, 'M1 4h22', 1) + at(9, 8, .65, spanner),
            peye: fs(G, D, 'M1 22v-4l5-2 5-4 4 4 7-5 1 11z') + s(N, 'M1 16l9 4 6-6 7 4', 1.200) + at(-4, -10, 1, eye) + s(N, 'M2 4q7-5 15 0', 1.300),
            pgraph: f('#fbdc94', 'M2 2h20v20H2z') + s(N, 'M3 2v20', 1.500) + s(O, 'M4 16q4 0 5-4 3-12 5-1 2 5 7 4', 1.400) + dash(N, 'M3 12h19'),
            pprev: fade(f('#fbdc94', 'M2 2h20v12H2z') + s(O, 'M4 13q4 0 5-4 3-10 5-1l6 3', 1.300) + s(N, 'M2 12h19', 1) + fs(S, S, 'M7 18l6-5v3h9v4h-9v3z'), .6),
            pnext: fade(f('#fbdc94', 'M2 2h20v12H2z') + s(O, 'M4 13q4 0 5-4 3-10 5-1l6 3', 1.300) + s(N, 'M2 12h19', 1) + fs(S, S, 'M22 18l-6-5v3H7v4h9v3z'), .6)
        };

        const selects = {
            shader: ['Atlas-Schattierung', 'w-[297px] ml-[2px] mr-[2px]'],
            fav: ['Favoritenliste setzen...', 'w-[270px] ml-[2px] mr-[2px]'],
            lidar: ['LiDAR nach RGB/Höhe färben', 'w-[273px] ml-[2px] mr-[2px]']
        };
        const drawn = n => `<svg class="size-[23px]" viewBox="0 0 24 24">${icons[n]}</svg>`;

        function tool(t) {
            if (t === '|') return '<span class="w-[8px] h-6 self-center flex justify-center"><span class="border-l border-r border-l-[#b4b8c0] border-r-white"></span></span>';
            if (t === 'wide') return '<span class="w-[59px]"></span>';
            const [name, label] = t.split(':');
            if (name === 'select') {
                const [text, cls] = selects[label];
                return `<span class="relative h-[19px] self-center ${cls}"><select aria-label="${text}" class="appearance-none block w-full h-[19px] bg-white pl-[3px] leading-[19px]"><option>${text}</option></select><span class="absolute right-0 top-px w-[14px] h-[17px] bg-[#d9dde5] border border-[#c3c7d0] grid place-items-center pointer-events-none"><svg class="w-[6px] h-[4px]" viewBox="0 0 6 4"><path d="M0 0h6L3 4z" fill="#666"/></svg></span></span>`;
            }
            const on = name[0] === '*';
            const cls = on ? 'border border-[#a9977c] bg-linear-to-b from-[#f5c08a] via-[#ffae55] to-[#ffe9a0]' : '';
            const n = name.replace('*', '');
            if (label) return `<button class="flex items-center h-[29px] text-[#4a4d55]"><span class="w-[30px] flex justify-center">${drawn(n)}</span><span class="w-[42px] pl-[4px] text-left">${label}</span></button>`;
            return `<button aria-label="${n}" class="w-[30px] h-[29px] grid place-items-center ${cls}">${drawn(n)}</button>`;
        }

        document.querySelectorAll('[data-tools]').forEach(bar => {
            bar.classList.add('flex', 'h-[33px]', 'rounded-l-sm', 'bg-linear-to-b', 'from-[#eaeef7]', 'to-[#d2d6df]', 'border-b', 'border-[#b0b4bd]');
            bar.innerHTML = '<span class="w-[10px] flex justify-center py-[6px]"><span class="border-l-2 border-dotted border-[#a9adb6]"></span></span>'
                + '<span class="flex items-center pr-[2px]">' + bar.dataset.tools.split(' ').map(tool).join('') + '</span>'
                + '<button aria-label="Optionen" class="w-[10px] h-[33px] rounded-r bg-[#b3b8c2] flex items-end justify-center pb-[3px]"><svg class="w-[7px] h-[7px]" viewBox="0 0 7 7"><path d="M1 .500h6" stroke="#fff"/><path d="M0 3h7L3.500 7z" fill="#fff"/><path d="M0 2.500h6L3 6z" fill="#555"/></svg></button>';
        });
        document.querySelectorAll('[data-icons]').forEach(bar => {
            bar.classList.add('items-center');
            bar.innerHTML = bar.dataset.icons.split(' ').map(tool).join('');
        });
        document.querySelectorAll('.panelbtns').forEach(p => {
            p.innerHTML = [['Minimieren', 'M3 10h6'], ['Maximieren', 'M2 3h8v8H2zM2 4h8'], ['Schließen', 'M2 3l8 8M10 3l-8 8']].map(([n, d]) =>
                `<button aria-label="${n}"><svg class="w-[13px] h-[13px]" viewBox="0 0 13 13"><path d="${d}" fill="none" stroke="#74777d" stroke-width="1.500"/></svg></button>`).join('');
        });

        // layer tree
        const kinds = {
            area: '<path d="M3 11.500V7.500H6V5.500L9 3.500h2.500v8H9v-4L6.500 9v2.500z" fill="none" stroke="#00007c" stroke-width="1.200"/>',
            line: '<path d="M2 7.500h10M5.500 4v3M8.500 8v4" stroke="#00007c" stroke-width="1.500"/>',
            point: '<path d="M3 3h2v2H3zM9 3h2v2H9zM6 6h2v2H6zM3 9h2v2H3zM9 9h2v2H9z" fill="#00007c"/>',
            grid: '<path d="M1 6h12v7H1z" fill="#ff0"/><path d="M2 9l2-3 2 4 2-5 2 4 2-2" stroke="#e00000" stroke-width="1.500" fill="none"/><path d="M2 12l2-3 2 2 2-3 2 3 2-2" stroke="#e08000" fill="none"/>'
        };
        const layers = [
            ['area', 'WATER LEVEL AREAS(2) [27 Features]', 0, 1], ['area', 'Stream-Buffer [1 Features]', 0], ['area', 'Stausee [1 Features]', 0],
            ['line', '15-Meter-Höhe [2 Features]', 0], ['point', 'Dam [2 Features]', 0], ['line', 'Stream [1 Features, 4 Deleted]', 1], ['grid', 'DTM-Reservoir.gmg', 1]
        ];
        const box = (id, on, bg) => `<span class="grid size-3"><input type="checkbox" id="${id}" ${on ? 'checked' : ''} class="peer appearance-none size-3 border border-black ${bg} col-start-1 row-start-1"><svg class="hidden peer-checked:block size-3 col-start-1 row-start-1 pointer-events-none" viewBox="0 0 12 12"><path d="M2.500 6l2 2.500 5-5.500" fill="none" stroke="#000" stroke-width="1.300"/></svg></span>`;
        document.getElementById('layers').innerHTML =
            `<li class="flex items-center h-[18px]"><svg class="size-[9px]" viewBox="0 0 9 9"><rect x=".500" y=".500" width="8" height="8" fill="#fff" stroke="#919191"/><path d="M2 4.500h5" stroke="#2c4fb0"/></svg><span class="w-[7px] border-t border-dotted border-[#808080]"></span>${box('root', 1, 'bg-[#c8c8c8]')}<label for="root" class="ml-[22px]">Aktueller Arbeitsbereich &lt;_Stausee-Buffer.gmw&gt;</label></li>`
            + layers.map(([kind, name, on, sel], i) =>
                `<li class="flex items-center h-[18px] ml-[23px]"><span class="w-[12px] self-stretch flex items-center ${i < 6 ? 'border-l border-dotted border-[#808080]' : ''}"><span class="flex-1 border-t border-dotted border-[#808080]"></span></span>${box('l' + i, on, 'bg-white')}<svg class="size-[14px] ml-[2px] mr-1" viewBox="0 0 14 14"><rect x=".500" y=".500" width="13" height="13" fill="#ffff00" stroke="#808000"/><rect x="2" y="2" width="10" height="10" fill="#fff" opacity=".9"/>${kinds[kind]}</svg><label for="l${i}" class="${sel ? 'bg-[#0078d7] text-white' : ''} h-[18px] leading-[18px] px-[2px]">${name}</label></li>`).join('');

        // profile along the path, as x y pairs
        const pts = [505,702, 596,702, 603,710, 617,713, 631,714, 644,724, 669,727, 698,738, 747,742, 765,753, 776,765, 804,769, 809,773, 812,779, 820,783, 833,785, 862,793, 876,793, 905,807, 925,820, 927,824, 938,824, 943,842, 954,850, 961,859, 971,859, 975,867, 985,870, 1003,870, 1028,879, 1057,879, 1059,880, 1135,880, 1143,882, 1277,882, 1304,908, 1322,909, 1349,912, 1357,927, 1367,928, 1380,933, 1384,937, 1393,938, 1406,944, 1427,945, 1445,950, 1458,950, 1470,957, 1480,960, 1604,960, 1610,969, 1661,969, 1671,975, 1805,975];
        const line = 'M' + pts.map((v, i) => i % 2 ? v + 1 : v).join(' ');
        document.getElementById('sight').setAttribute('d', line);
        document.getElementById('sight2').setAttribute('d', line);
        document.getElementById('terrain').setAttribute('d', line + 'V1003H505z');
        document.getElementById('bare').setAttribute('d', 'M596 704l3 5 6 2M629 716l4 5 4 1 6 3M690 735l5-3 6 3M755 749l6 8 6 4M776 768l8 3 10 0M900 806l-1 5 6 0M806 772l4 9 8 2M940 842l10 11 8 3M1276 885l0 7 9 0 8 9 6 6 4-6M1351 912l1 14 5 0M1388 939l2 6 8-1M1602 962l3 6M1642 968l9-1 2-7 6 8');
    </script>
</body>
</html>
